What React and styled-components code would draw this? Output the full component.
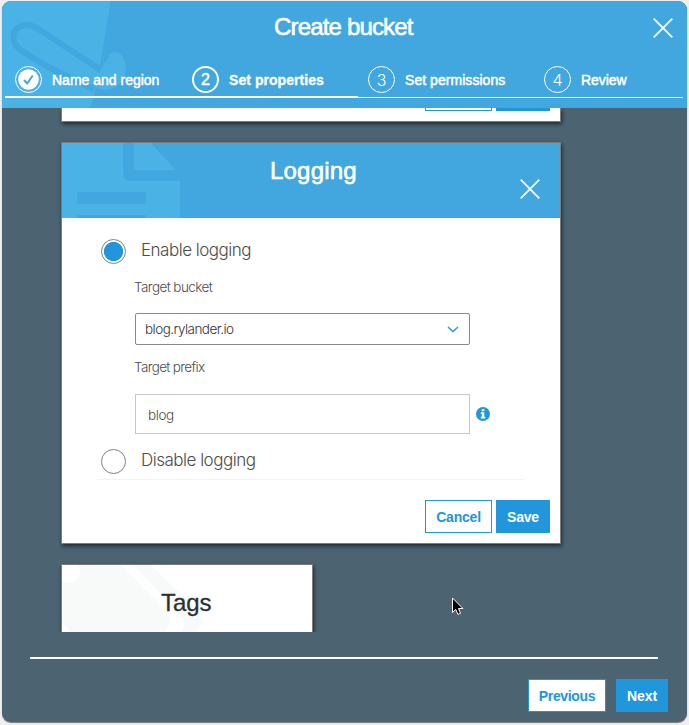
import React from "react";
import styled, { createGlobalStyle } from "styled-components";

const BLUE = "#2196db";
const HEADER = "#42a6df";
const LIGHT = "#4bb2e6";
const SLATE = "#4c6372";

const Global = createGlobalStyle`
  * { box-sizing: border-box; }
  body { margin: 0; background: #efefef; font-family: "Liberation Sans", Arial, sans-serif; }
`;

const Page = styled.div`
  width: 689px;
  height: 725px;
  padding: 1px 2px 2px;
  overflow: hidden;
`;

const Modal = styled.div`
  display: flex;
  flex-direction: column;
  width: 685px;
  height: 721px;
  border-radius: 9px;
  overflow: hidden;
  background: ${SLATE};
  box-shadow: 0 1px 1px 0 #777;
`;

const Art = styled.svg`
  position: absolute;
  left: 0;
  top: 0;
  z-index: -1;
`;

const Header = styled.header`
  position: relative;
  z-index: 0;
  flex: none;
  height: 107px;
  background: ${HEADER};
  color: #fff;
`;

const TitleBar = styled.div`
  display: grid;
  grid-template-columns: 1fr auto;
  height: 65px;
  padding: 17px 14px 0 0;
`;

const Title = styled.h1`
  margin: -5px 0 0 272px;
  font-size: 24px;
  line-height: 28px;
  font-weight: 400;
  letter-spacing: -0.83px;
  white-space: nowrap;
  -webkit-text-stroke: 0.6px #fff;
`;

const CloseButton = styled.button`
  display: block;
  width: 20px;
  height: 20px;
  padding: 0;
  border: 0;
  background: none;
  svg { display: block; }
`;

const Steps = styled.nav`
  display: flex;
  margin-left: 3px;
  width: 678px;
  height: 32px;
`;

const Step = styled.div`
  display: flex;
  flex: none;
  width: ${(p) => (p.$last ? 148.5 : 176.5)}px;
  height: 32px;
  padding-left: ${(p) => p.$pad}px;
  border-bottom: ${(p) => (p.$reached ? 2 : 1)}px solid #fff;
`;

const StepCircle = styled.span`
  display: flex;
  align-items: center;
  justify-content: center;
  flex: none;
  width: 27px;
  height: 27px;
  border: ${(p) => (p.$current ? 2 : 1)}px solid #fff;
  border-radius: 50%;
  font-family: ${(p) => (p.$current ? '"Liberation Sans"' : "Inter")}, sans-serif;
  font-weight: ${(p) => (p.$current ? 400 : 300)};
  font-size: 16px;
  -webkit-text-stroke: ${(p) => (p.$current ? "0.5px #fff" : "0")};
`;

const StepLabel = styled.span`
  margin-left: 10px;
  font-size: 14px;
  line-height: 28px;
  white-space: nowrap;
  letter-spacing: ${(p) => p.$ls}px;
  font-weight: ${(p) => (p.$current ? 700 : 400)};
  -webkit-text-stroke: ${(p) => (p.$current ? "0.3px" : "0.5px")} #fff;
`;

const Scroller = styled.main`
  flex: none;
  height: 524px;
  padding-left: 59px;
  overflow: hidden;
`;

const Card = styled.section`
  position: relative;
  z-index: 0;
  width: ${(p) => p.$w}px;
  height: ${(p) => p.$h}px;
  margin-bottom: 20px;
  border: 1px solid #7c7c7c;
  ${(p) => p.$cut && "border-top: 0;"}
  background: #fff;
  box-shadow: 1px 2px 4px rgba(0, 0, 0, 0.6);
`;

const CardHeader = styled.div`
  position: relative;
  z-index: 0;
  display: grid;
  grid-template-columns: 1fr auto;
  height: 75px;
  padding: 36px 20px 0 0;
  background: ${HEADER};
`;

const CardTitle = styled.h2`
  margin: -22px 0 0 208px;
  font-size: 24px;
  line-height: 28px;
  font-weight: 400;
  letter-spacing: 0.2px;
  color: #fff;
  -webkit-text-stroke: 0.6px #fff;
`;

const TagsTitle = styled.h2`
  margin: 24px 0 0 99px;
  font-size: 24px;
  line-height: 28px;
  font-weight: 400;
  letter-spacing: -0.1px;
  color: #2b2f33;
  -webkit-text-stroke: 0.3px #2b2f33;
`;

const Form = styled.div`
  height: 262px;
  margin: 0 36px 0 35px;
  padding: 21px 0 0 4px;
  border-bottom: 1px solid #f1f2f2;
`;

const RadioRow = styled.label`
  display: flex;
  height: 25px;
`;

const Radio = styled.span`
  flex: none;
  width: 25px;
  height: 25px;
  margin-right: 15px;
  border: 1px solid #7d8383;
  border-radius: 50%;
  background: ${(p) => (p.$on ? `radial-gradient(circle, ${BLUE} 9.2px, #fff 10px)` : "#fff")};
`;

const RadioLabel = styled.span`
  font-family: Inter, "Liberation Sans", sans-serif;
  font-weight: 300;
  font-size: 17px;
  line-height: 22px;
  letter-spacing: ${(p) => p.$ls}px;
  color: #4c4c4c;
`;

const FieldLabel = styled.div`
  margin-left: 33px;
  font-family: Inter, "Liberation Sans", sans-serif;
  font-weight: 300;
  font-size: 13.5px;
  height: 16px;
  line-height: 16px;
  margin-top: ${(p) => p.$mt}px;
  letter-spacing: ${(p) => p.$ls}px;
  color: #4c4c4c;
`;

const Field = styled.div`
  display: flex;
  align-items: center;
  width: 335px;
  flex: none;
  font-family: Inter, "Liberation Sans", sans-serif;
  font-weight: 300;
  font-size: 13.5px;
  letter-spacing: ${(p) => p.$ls}px;
`;

const Select = styled(Field)`
  justify-content: space-between;
  height: 32px;
  margin: 18px 0 0 34px;
  padding: 0 10px 0 9px;
  border: 1px solid #858a8a;
  border-radius: 2px;
  color: #333;
`;

const TextInput = styled(Field)`
  height: 40px;
  padding: 2px 12px 0;
  border: 1px solid #c6c8c8;
  color: #4c4c4c;
`;

const InputRow = styled.div`
  display: flex;
  align-items: center;
  gap: 6px;
  margin: 19px 0 15px 34px;
`;

const Actions = styled.div`
  display: flex;
  justify-content: flex-end;
  gap: ${(p) => p.$gap}px;
  margin: ${(p) => p.$m};
`;

const Button = styled.button`
  width: ${(p) => p.$w}px;
  height: 33px;
  padding: 1px 0 0;
  border: 1px solid ${BLUE};
  background: ${(p) => (p.$primary ? BLUE : "#fff")};
  color: ${(p) => (p.$primary ? "#fff" : BLUE)};
  font: 700 14px "Liberation Sans", Arial, sans-serif;
  letter-spacing: ${(p) => p.$ls}px;
`;

const ButtonEdge = styled.span`
  width: ${(p) => p.$w}px;
  height: 3px;
  border: 1px solid ${BLUE};
  border-top: 0;
  background: ${(p) => (p.$primary ? BLUE : "#fff")};
`;

const Footer = styled.footer`
  height: 55px;
  margin: 25px 29px 0 28px;
  border-top: 2px solid #fff;
`;

const Cursor = styled.svg`
  position: absolute;
  left: 451px;
  top: 597px;
`;

const Close = () => (
  <CloseButton aria-label="Close">
    <svg width="20" height="20" viewBox="0 0 20 20" fill="none" stroke="#f2faff" strokeWidth="1.9">
      <path d="M.7.7 19.3 19.3M19.3.7.7 19.3" />
    </svg>
  </CloseButton>
);

export default function App() {
  return (
    <Page>
      <Global />
      <Modal>
        <Header>
          <Art width="140" height="107" viewBox="2 1 140 107" fill="none">
            <path d="M2 1H110.500L99.500 69C102 67 104 64 107 60C109 57 109 52 115 52C122 52 126 61 126 69C126 80 117 90 105 89.500C100 89.500 98 89 96 88L92 104L89 108H2Z" fill={LIGHT} />
            <path d="M94 89C65 76 40 63 22 51C8 41 12 25 27 25C32 25 35 27 40 30L101 70" stroke={HEADER} strokeWidth="6" />
          </Art>
          <TitleBar>
            <Title>Create bucket</Title>
            <Close />
          </TitleBar>
          <Steps>
            <Step $reached $pad={10}>
              <StepCircle>
                <svg width="21" height="21" viewBox="0 0 21 21">
                  <circle cx="10.500" cy="10.500" r="10.300" fill="#fff" />
                  <path d="m6 11 3.200 3.500 5.600-8" fill="none" stroke={HEADER} strokeWidth="2" />
                </svg>
              </StepCircle>
              <StepLabel $ls={0}>Name and region</StepLabel>
            </Step>
            <Step $reached $pad={10.5}>
              <StepCircle $current>2</StepCircle>
              <StepLabel $current $ls={0.05}>Set properties</StepLabel>
            </Step>
            <Step $pad={10}>
              <StepCircle>3</StepCircle>
              <StepLabel $ls={0.05}>Set permissions</StepLabel>
            </Step>
            <Step $pad={9.5} $last>
              <StepCircle>4</StepCircle>
              <StepLabel $ls={-0.05}>Review</StepLabel>
            </Step>
          </Steps>
        </Header>
        <Scroller>
          <Card $w={500} $h={14} $cut>
            <Actions $gap={4} $m="0 10px 0 0">
              <ButtonEdge $w={67} />
              <ButtonEdge $w={54} $primary />
            </Actions>
          </Card>
          <Card $w={500} $h={402}>
            <CardHeader>
              <Art width="130" height="75" viewBox="62 143 130 75">
                <path d="M62 143H123V173Q123 181 132 181H180V218H62Z" fill={LIGHT} />
                <path d="M134 143H151L176 170H134Z" fill={LIGHT} />
                <rect x="77" y="192" width="69" height="12" rx="2.500" fill={HEADER} />
                <path d="M77 218v-1q0-2 2-2h65q2 0 2 2v1z" fill={HEADER} />
              </Art>
              <CardTitle>Logging</CardTitle>
              <Close />
            </CardHeader>
            <Form>
              <RadioRow>
                <Radio $on />
                <RadioLabel $ls={-0.5}>Enable logging</RadioLabel>
              </RadioRow>
              <FieldLabel $mt={15} $ls={-0.58}>Target bucket</FieldLabel>
              <Select $ls={-0.55}>
                blog.rylander.io
                <svg width="12" height="7" viewBox="0 0 12 7" fill="none" stroke={BLUE} strokeWidth="1.400">
                  <path d="M1 1l5 4.600L11 1" />
                </svg>
              </Select>
              <FieldLabel $mt={14} $ls={-0.65}>Target prefix</FieldLabel>
              <InputRow>
                <TextInput $ls={-0.4}>blog</TextInput>
                <svg width="14" height="14" viewBox="0 0 14 14">
                  <circle cx="7" cy="7" r="7" fill={BLUE} />
                  <path d="M5.800 2h2.500v2.200H5.800zM4.800 5.300h3.500v4.500h1v1.700H4.800V9.800h1V7h-1z" fill="#fff" />
                </svg>
              </InputRow>
              <RadioRow>
                <Radio />
                <RadioLabel $ls={-0.5}>Disable logging</RadioLabel>
              </RadioRow>
            </Form>
            <Actions $gap={4} $m="20px 10px 0 0">
              <Button $w={67} $ls={-0.2}>Cancel</Button>
              <Button $w={54} $ls={-0.2} $primary>Save</Button>
            </Actions>
          </Card>
          <Card $w={252} $h={252}>
            <Art width="160" height="90" viewBox="62 565 160 90" fill="none">
              <path d="M62 565H121L166 611Q173 619 168 627L160 640H78L62 622Z" fill="#f8faf9" />
              <path d="M134 565H151L199 612Q204 619 200 626L190 640H176L181 632Q186 624 181 617Z" fill="#f8faf9" />
              <circle cx="68" cy="571" r="12" fill="#fff" />
            </Art>
            <TagsTitle>Tags</TagsTitle>
          </Card>
        </Scroller>
        <Footer>
          <Actions $gap={10} $m="20px -10px 0 0">
            <Button $w={78} $ls={-0.35}>Previous</Button>
            <Button $w={52} $ls={-0.1} $primary>Next</Button>
          </Actions>
        </Footer>
      </Modal>
      <Cursor width="14" height="20" viewBox="0 0 14 20">
        <path d="M1.500 1v14.500l3.300-3.100 2.100 5 2.600-1.100-2-4.800h4.400z" fill="#000" stroke="#fff" strokeWidth="1" />
      </Cursor>
    </Page>
  );
}
